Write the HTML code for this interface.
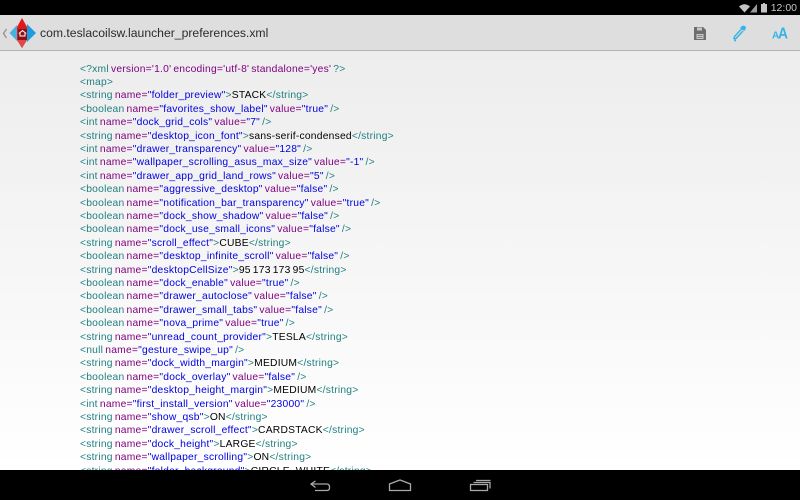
<!DOCTYPE html>
<html><head><meta charset="utf-8"><style>
html,body{margin:0;padding:0;width:800px;height:500px;overflow:hidden;background:#000;font-family:"Liberation Sans",sans-serif}
#status{position:absolute;left:0;top:0;width:800px;height:15px;background:#000}
#clock{position:absolute;right:3px;top:1px;font-size:10.5px;line-height:15px;color:#c4c4c4;letter-spacing:0}
#bar{position:absolute;left:0;top:15px;width:800px;height:35px;background:#dedede;border-bottom:1px solid #b4b4b4}
#title{position:absolute;left:40px;top:25.500px;font-size:12.2px;line-height:15px;color:#2c2c2c;letter-spacing:0;white-space:nowrap}
#main{position:absolute;left:0;top:51px;width:800px;height:419px;overflow:hidden;background:linear-gradient(#ededed,#fff)}
#code{position:absolute;left:80px;top:11.500px;font-size:10.3px;line-height:13.4px;color:#000;white-space:pre;letter-spacing:.22px;word-spacing:-1px}
.t{color:#1f7f7f}.a{color:#800080}.v{color:#0000e0}
#nav{position:absolute;left:0;top:470px;width:800px;height:30px;background:#000}
svg{position:absolute;overflow:visible}
</style></head><body>
<div id="main"><div id="code"><span class="t">&lt;?xml</span> <span class="a">version='1.0' encoding='utf-8' standalone='yes'</span> <span class="t">?&gt;</span>
<span class="t">&lt;map&gt;</span>
<span class="t">&lt;string</span> <span class="a">name=</span><span class="v">"folder_preview"</span><span class="t">&gt;</span>STACK<span class="t">&lt;/string&gt;</span>
<span class="t">&lt;boolean</span> <span class="a">name=</span><span class="v">"favorites_show_label"</span> <span class="a">value=</span><span class="v">"true"</span> <span class="t">/&gt;</span>
<span class="t">&lt;int</span> <span class="a">name=</span><span class="v">"dock_grid_cols"</span> <span class="a">value=</span><span class="v">"7"</span> <span class="t">/&gt;</span>
<span class="t">&lt;string</span> <span class="a">name=</span><span class="v">"desktop_icon_font"</span><span class="t">&gt;</span>sans-serif-condensed<span class="t">&lt;/string&gt;</span>
<span class="t">&lt;int</span> <span class="a">name=</span><span class="v">"drawer_transparency"</span> <span class="a">value=</span><span class="v">"128"</span> <span class="t">/&gt;</span>
<span class="t">&lt;int</span> <span class="a">name=</span><span class="v">"wallpaper_scrolling_asus_max_size"</span> <span class="a">value=</span><span class="v">"-1"</span> <span class="t">/&gt;</span>
<span class="t">&lt;int</span> <span class="a">name=</span><span class="v">"drawer_app_grid_land_rows"</span> <span class="a">value=</span><span class="v">"5"</span> <span class="t">/&gt;</span>
<span class="t">&lt;boolean</span> <span class="a">name=</span><span class="v">"aggressive_desktop"</span> <span class="a">value=</span><span class="v">"false"</span> <span class="t">/&gt;</span>
<span class="t">&lt;boolean</span> <span class="a">name=</span><span class="v">"notification_bar_transparency"</span> <span class="a">value=</span><span class="v">"true"</span> <span class="t">/&gt;</span>
<span class="t">&lt;boolean</span> <span class="a">name=</span><span class="v">"dock_show_shadow"</span> <span class="a">value=</span><span class="v">"false"</span> <span class="t">/&gt;</span>
<span class="t">&lt;boolean</span> <span class="a">name=</span><span class="v">"dock_use_small_icons"</span> <span class="a">value=</span><span class="v">"false"</span> <span class="t">/&gt;</span>
<span class="t">&lt;string</span> <span class="a">name=</span><span class="v">"scroll_effect"</span><span class="t">&gt;</span>CUBE<span class="t">&lt;/string&gt;</span>
<span class="t">&lt;boolean</span> <span class="a">name=</span><span class="v">"desktop_infinite_scroll"</span> <span class="a">value=</span><span class="v">"false"</span> <span class="t">/&gt;</span>
<span class="t">&lt;string</span> <span class="a">name=</span><span class="v">"desktopCellSize"</span><span class="t">&gt;</span>95 173 173 95<span class="t">&lt;/string&gt;</span>
<span class="t">&lt;boolean</span> <span class="a">name=</span><span class="v">"dock_enable"</span> <span class="a">value=</span><span class="v">"true"</span> <span class="t">/&gt;</span>
<span class="t">&lt;boolean</span> <span class="a">name=</span><span class="v">"drawer_autoclose"</span> <span class="a">value=</span><span class="v">"false"</span> <span class="t">/&gt;</span>
<span class="t">&lt;boolean</span> <span class="a">name=</span><span class="v">"drawer_small_tabs"</span> <span class="a">value=</span><span class="v">"false"</span> <span class="t">/&gt;</span>
<span class="t">&lt;boolean</span> <span class="a">name=</span><span class="v">"nova_prime"</span> <span class="a">value=</span><span class="v">"true"</span> <span class="t">/&gt;</span>
<span class="t">&lt;string</span> <span class="a">name=</span><span class="v">"unread_count_provider"</span><span class="t">&gt;</span>TESLA<span class="t">&lt;/string&gt;</span>
<span class="t">&lt;null</span> <span class="a">name=</span><span class="v">"gesture_swipe_up"</span> <span class="t">/&gt;</span>
<span class="t">&lt;string</span> <span class="a">name=</span><span class="v">"dock_width_margin"</span><span class="t">&gt;</span>MEDIUM<span class="t">&lt;/string&gt;</span>
<span class="t">&lt;boolean</span> <span class="a">name=</span><span class="v">"dock_overlay"</span> <span class="a">value=</span><span class="v">"false"</span> <span class="t">/&gt;</span>
<span class="t">&lt;string</span> <span class="a">name=</span><span class="v">"desktop_height_margin"</span><span class="t">&gt;</span>MEDIUM<span class="t">&lt;/string&gt;</span>
<span class="t">&lt;int</span> <span class="a">name=</span><span class="v">"first_install_version"</span> <span class="a">value=</span><span class="v">"23000"</span> <span class="t">/&gt;</span>
<span class="t">&lt;string</span> <span class="a">name=</span><span class="v">"show_qsb"</span><span class="t">&gt;</span>ON<span class="t">&lt;/string&gt;</span>
<span class="t">&lt;string</span> <span class="a">name=</span><span class="v">"drawer_scroll_effect"</span><span class="t">&gt;</span>CARDSTACK<span class="t">&lt;/string&gt;</span>
<span class="t">&lt;string</span> <span class="a">name=</span><span class="v">"dock_height"</span><span class="t">&gt;</span>LARGE<span class="t">&lt;/string&gt;</span>
<span class="t">&lt;string</span> <span class="a">name=</span><span class="v">"wallpaper_scrolling"</span><span class="t">&gt;</span>ON<span class="t">&lt;/string&gt;</span>
<span class="t">&lt;string</span> <span class="a">name=</span><span class="v">"folder_background"</span><span class="t">&gt;</span>CIRCLE_WHITE<span class="t">&lt;/string&gt;</span></div></div>
<div id="status">
<svg style="left:0;top:0" width="800" height="15">
<path d="M739 6.500 Q744.500 2 750 6.500 L744.500 12.500Z" fill="#c4c4c4"/>
<path d="M750 12.500 L757 12.500 L757 4Z" fill="#9a9a9a"/>
<rect x="761" y="4" width="6" height="8.500" fill="#c4c4c4"/><rect x="763" y="3" width="2" height="1" fill="#c4c4c4"/>
</svg>
<div id="clock">12:00</div></div>
<div id="bar"></div>
<div id="title">com.teslacoilsw.launcher_preferences.xml</div>
<svg style="left:0;top:0" width="800" height="52">
<path d="M6.500 29 L3.500 33.500 L6.500 38" fill="none" stroke="#999" stroke-width="1.500"/>
<path d="M17 25 L9.500 33 L17 41Z" fill="#45b3dc"/>
<path d="M27 24 L36 33 L27 42Z" fill="#1f9be0"/>
<path d="M17 27 L22 18 L27 27 L27 40 L22 48 L17 40Z" fill="#e5171d"/>
<path d="M17 40 L22 48 L27 40Z" fill="#e0484b"/>
<rect x="18" y="29" width="9" height="11" fill="#8e1015"/>
<path d="M19.500 33 L22.500 30.500 L25.500 33 L25 33 L25 36 L20 36 L20 33Z" fill="none" stroke="#fff" stroke-width="1"/>
<path d="M694 27 H703 L706 30 V40 H694Z" fill="#6d6d6d"/>
<rect x="697" y="27.500" width="5" height="3" fill="#c8c8c8"/>
<rect x="696.500" y="34" width="7" height="5" fill="#c8c8c8"/>
<path d="M697.500 35.500 H702.500 M697.500 37.500 H702.500" stroke="#6d6d6d" stroke-width=".7"/>
<path d="M741.500 29 L734.500 36.500 L734 38.500 L736 38.500 L743 31" fill="none" stroke="#33b5e5" stroke-width="1.400"/>
<path d="M740 28 L742 26 Q744 25 745.500 26.500 Q746.500 28 745 30 L744 31Z" fill="#33b5e5"/>
<path d="M735 38.500 Q737 41 735.500 41.500 Q733 41.500 735 38.500Z" fill="#33b5e5"/>
<text x="772" y="38.500" font-size="10" font-weight="700" fill="#33b5e5" font-family="Liberation Sans">A</text>
<text x="778" y="38.500" font-size="16" font-weight="700" fill="#33b5e5" font-family="Liberation Sans" textLength="10" lengthAdjust="spacingAndGlyphs">A</text>
</svg>
<div id="nav"></div>
<svg style="left:0;top:0" width="800" height="500">
<g fill="none" stroke="#a8a8a8" stroke-width="1.300">
<path d="M311 484 H326.500 Q329.500 484 329.500 487 V488 Q329.500 490.500 326.500 490.500 H315"/>
<path d="M315.500 481 L311 484 L315.500 487.500"/>
<path d="M389.500 490.500 V484 L400 480 L410.500 484 V490.500Z"/>
<rect x="470.500" y="484.500" width="17" height="6"/>
<path d="M473.500 482.500 H490 V488.500"/>
<path d="M476 480.500 H490.500"/>
</g>
</svg>
</body></html>
